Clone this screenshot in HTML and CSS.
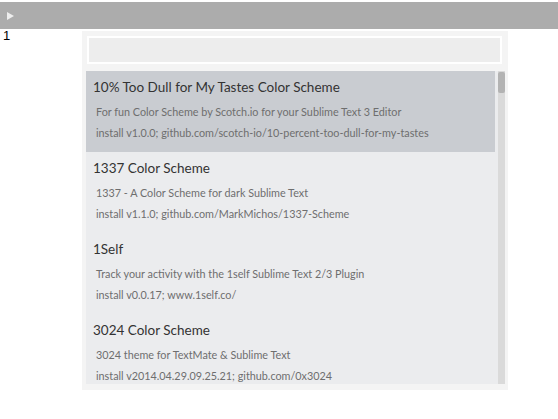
FILE: index.html
```html
<!DOCTYPE html>
<html>
<head>
<meta charset="utf-8">
<link rel="stylesheet" href="styles.css">
</head>
<body>
<div class="bar"><span class="tri"></span></div>
<div class="main">
  <div class="gutter">1</div>
  <div class="panel">
    <div class="search"></div>
    <div class="listwrap">
      <div class="list">
        <div class="item sel">
          <div class="title">10% Too Dull for My Tastes Color Scheme</div>
          <div class="desc">For fun Color Scheme by Scotch.io for your Sublime Text 3 Editor</div>
          <div class="desc">install v1.0.0; github.com/scotch-io/10-percent-too-dull-for-my-tastes</div>
        </div>
        <div class="item">
          <div class="title">1337 Color Scheme</div>
          <div class="desc">1337 - A Color Scheme for dark Sublime Text</div>
          <div class="desc">install v1.1.0; github.com/MarkMichos/1337-Scheme</div>
        </div>
        <div class="item">
          <div class="title">1Self</div>
          <div class="desc">Track your activity with the 1self Sublime Text 2/3 Plugin</div>
          <div class="desc">install v0.0.17; www.1self.co/</div>
        </div>
        <div class="item">
          <div class="title">3024 Color Scheme</div>
          <div class="desc">3024 theme for TextMate &amp; Sublime Text</div>
          <div class="desc">install v2014.04.29.09.25.21; github.com/0x3024</div>
        </div>
      </div>
      <div class="track"><div class="thumb"></div></div>
    </div>
  </div>
</div>
</body>
</html>
```
FILE: styles.css
```css
html, body { margin: 0; padding: 0; background: #fff; }
body { font-family: "Lato", "Noto Sans", sans-serif; color: #333; }
.bar { margin-top: 2px; height: 27px; background: #acacac; display: flex; align-items: center; padding-left: 7px; }
.tri { width: 0; height: 0; border-left: 7px solid #eeeeee; border-top: 4px solid transparent; border-bottom: 4px solid transparent; }
.main { display: flex; }
.gutter { width: 82px; padding-left: 3px; box-sizing: border-box; font-size: 13px; line-height: 14px; font-family: "Liberation Sans", sans-serif; color: #000; }
.panel { margin-top: 2px; width: 426px; height: 359px; background: #f4f4f4; box-sizing: border-box; padding: 5px 3px 6px 4px; }
.search { height: 24px; margin: 0 3px 0 1px; border: 2px solid #fff; background: #ededed; }
.listwrap { margin-top: 7px; display: flex; height: 313px; background: #ebecee; }
.list { flex: 1; overflow: hidden; }
.item { height: 81px; box-sizing: border-box; padding: 7px 0 0 7px; width: 409px; }
.item.sel { background: #c9ccd1; }
.title { font-size: 13.5px; line-height: 18px; color: #333; margin-bottom: 5px; }
.desc { font-size: 10.8px; line-height: 21px; color: #6e6e6e; padding-left: 3px; }
.track { width: 7px; margin-left: 3px; background: #dadada; position: relative; }
.thumb { position: absolute; top: 1px; left: 0; width: 7px; height: 21px; background: #b3b3b3; border-radius: 2px; }
```
